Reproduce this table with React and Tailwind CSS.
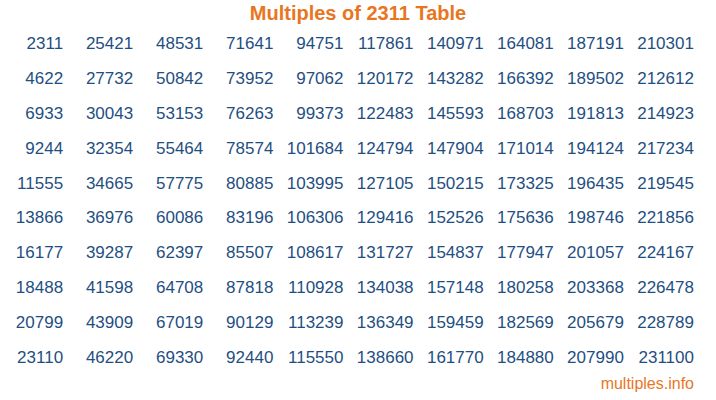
import React from 'react';

const BASE = 2311;

export default function App() {
  // column-major: first column is 1..10, second 11..20, etc.
  const cells = [];
  for (let row = 0; row < 10; row++) {
    for (let col = 0; col < 10; col++) {
      cells.push(BASE * (col * 10 + row + 1));
    }
  }

  return (
    <div
      className="w-[716px] h-[400px] bg-white overflow-hidden"
      style={{ fontFamily: '"Liberation Sans", Arial, sans-serif' }}
    >
      <h1 className="h-[26px] leading-[26px] text-center text-[20px] font-bold text-[#e8761f]">
        Multiples of 2311 Table
      </h1>

      <div className="mt-[0.5px] grid grid-cols-[repeat(10,70.1px)] auto-rows-[34.9px] items-center">
        {cells.map((n, i) => (
          <div key={i} className="text-right pr-[7px] text-[17px] leading-[20px] text-[#1f4f82]">
            {n}
          </div>
        ))}
      </div>

      <div className="flex justify-end pr-[22px]">
        <span className="text-[16px] leading-[18px] text-[#e8761f]">multiples.info</span>
      </div>
    </div>
  );
}
